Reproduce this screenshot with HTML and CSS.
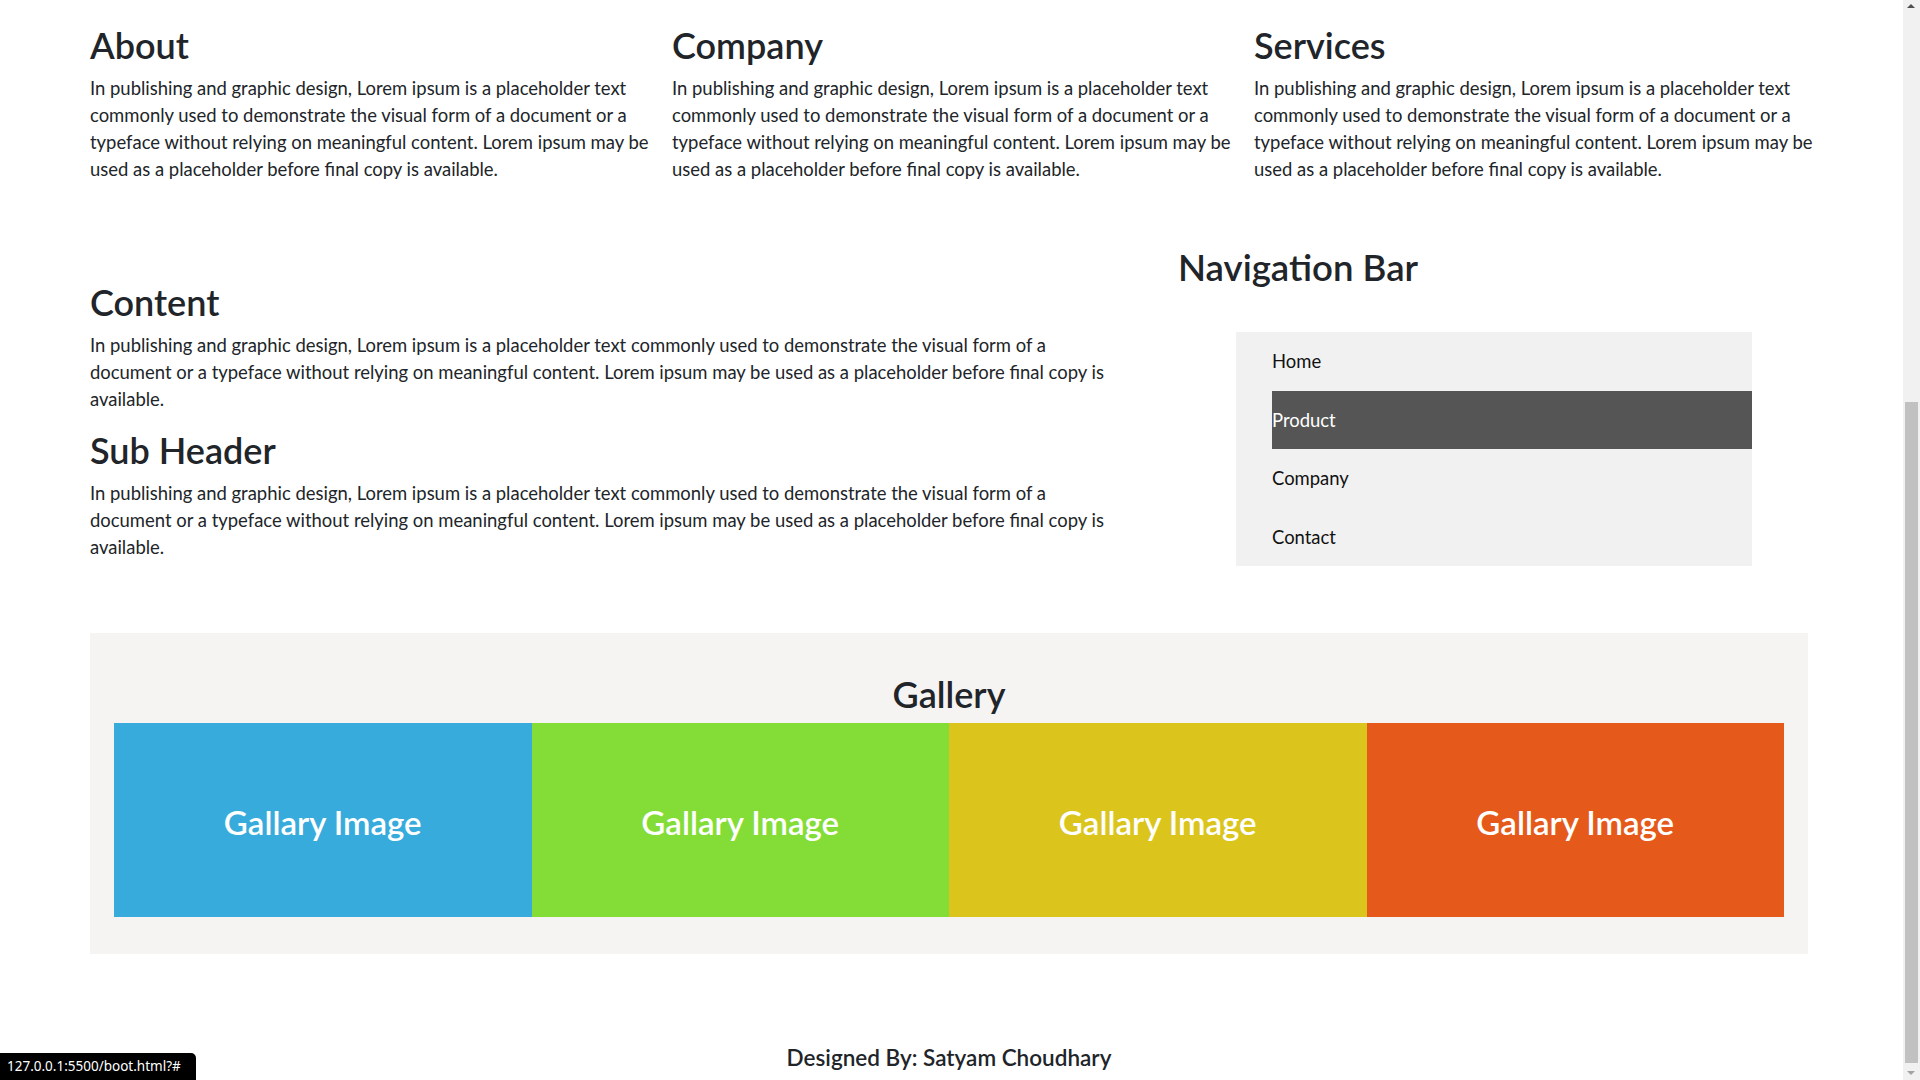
FILE: index.html
```html
<!DOCTYPE html>
<html lang="en">
<head>
<meta charset="utf-8">
<title>Boot</title>
<link rel="stylesheet" href="styles.css">
</head>
<body>
<div class="window">
  <div class="viewport">
    <div class="container">
      <div class="row-three">
        <section class="col">
          <h2 class="heading">About</h2>
          <p class="text">In publishing and graphic design, Lorem ipsum is a placeholder text commonly used to demonstrate the visual form of a document or a typeface without relying on meaningful content. Lorem ipsum may be used as a placeholder before final copy is available.</p>
        </section>
        <section class="col">
          <h2 class="heading">Company</h2>
          <p class="text">In publishing and graphic design, Lorem ipsum is a placeholder text commonly used to demonstrate the visual form of a document or a typeface without relying on meaningful content. Lorem ipsum may be used as a placeholder before final copy is available.</p>
        </section>
        <section class="col">
          <h2 class="heading">Services</h2>
          <p class="text">In publishing and graphic design, Lorem ipsum is a placeholder text commonly used to demonstrate the visual form of a document or a typeface without relying on meaningful content. Lorem ipsum may be used as a placeholder before final copy is available.</p>
        </section>
      </div>

      <div class="row-two">
        <div class="main-col">
          <h2 class="heading">Content</h2>
          <p class="text">In publishing and graphic design, Lorem ipsum is a placeholder text commonly used to demonstrate the visual form of a document or a typeface without relying on meaningful content. Lorem ipsum may be used as a placeholder before final copy is available.</p>
          <h2 class="heading">Sub Header</h2>
          <p class="text last">In publishing and graphic design, Lorem ipsum is a placeholder text commonly used to demonstrate the visual form of a document or a typeface without relying on meaningful content. Lorem ipsum may be used as a placeholder before final copy is available.</p>
        </div>
        <aside class="side-col">
          <h2 class="heading nav-title">Navigation Bar</h2>
          <ul class="nav">
            <li class="nav-item"><a href="#">Home</a></li>
            <li class="nav-item active"><a href="#">Product</a></li>
            <li class="nav-item"><a href="#">Company</a></li>
            <li class="nav-item"><a href="#">Contact</a></li>
          </ul>
        </aside>
      </div>

      <div class="gallery">
        <h2 class="heading gallery-title">Gallery</h2>
        <div class="tiles">
          <div class="tile blue">Gallary Image</div>
          <div class="tile green">Gallary Image</div>
          <div class="tile yellow">Gallary Image</div>
          <div class="tile orange">Gallary Image</div>
        </div>
      </div>

      <footer class="footer">
        <h5 class="credit">Designed By: Satyam Choudhary</h5>
      </footer>
    </div>
  </div>
  <div class="scrollbar">
    <div class="arrow up"></div>
    <div class="track">
      <div class="thumb"></div>
    </div>
    <div class="arrow down"></div>
  </div>
</div>
<div class="status">127.0.0.1:5500/boot.html?#</div>
</body>
</html>
```
FILE: styles.css
```css
* { box-sizing: border-box; }

html, body {
  margin: 0;
  padding: 0;
  height: 1080px;
  overflow: hidden;
  background: #ffffff;
}

body {
  font-family: Lato, "Noto Sans", sans-serif;
  color: #212529;
  font-size: 18.45px;
  line-height: 27px;
}

.window {
  display: flex;
  width: 1920px;
  height: 1080px;
}

.viewport {
  width: 1903px;
  height: 1080px;
  overflow: hidden;
}

.container {
  width: 1718px;
  margin-left: 90px;
  padding-top: 24px;
}

.heading {
  margin: 0 0 8px 0;
  font-size: 36px;
  line-height: 43px;
  font-weight: 600;
}

.text {
  margin: 0 0 16px 0;
}

.text.last { margin-bottom: 0; }

.row-three {
  display: grid;
  grid-template-columns: repeat(3, 568px);
  column-gap: 14px;
}

.row-two {
  display: flex;
  margin-top: 47px;
}

.main-col {
  width: 1020px;
  padding-top: 35px;
}

.side-col {
  margin-left: 68px;
  width: 630px;
}

.nav-title {
  margin-bottom: 0;
  font-size: 36.6px;
}

.nav {
  list-style: none;
  margin: 43px 0 0 58px;
  padding: 0 0 0 36px;
  width: 516px;
  background: #f1f1f1;
}

.nav-item a {
  display: block;
  height: 58.5px;
  line-height: 58.5px;
  color: #111;
  text-decoration: none;
}

.nav-item.active a {
  background: #555555;
  color: #ffffff;
}

.gallery {
  margin-top: 67px;
  background: #f5f4f3;
  padding: 40px 24px 37px 24px;
}

.gallery-title {
  text-align: center;
  margin-bottom: 7px;
}

.tiles {
  display: grid;
  grid-template-columns: repeat(4, 1fr);
  height: 194px;
}

.tile {
  display: flex;
  align-items: center;
  justify-content: center;
  color: #ffffff;
  font-size: 33px;
  font-weight: 600;
  padding-top: 4px;
}

.blue { background: #37acdc; }
.green { background: #84dd37; }
.yellow { background: #dbc51c; }
.orange { background: #e55a1a; }

.footer {
  margin-top: 90px;
  text-align: center;
}

.credit {
  margin: 0;
  font-size: 22.5px;
  line-height: 27px;
  font-weight: 600;
}

/* fake scrollbar */
.scrollbar {
  width: 17px;
  height: 1080px;
  background: #f1f1f1;
  display: flex;
  flex-direction: column;
}

.arrow {
  height: 17px;
  position: relative;
}

.arrow::after {
  content: "";
  position: absolute;
  left: 4px;
  width: 0;
  height: 0;
  border-left: 4.5px solid transparent;
  border-right: 4.5px solid transparent;
}

.arrow.up::after {
  top: 4px;
  border-bottom: 4px solid #505050;
}

.arrow.down::after {
  top: 8px;
  border-top: 4px solid #a3a3a3;
}

.track {
  flex: 1;
  display: flex;
  flex-direction: column;
  justify-content: flex-end;
  padding: 0 2px;
}

.thumb {
  height: 661px;
  background: #c1c1c1;
}

.status {
  position: fixed;
  left: 0;
  bottom: 0;
  width: 196px;
  height: 27px;
  background: #000000;
  color: #ffffff;
  font-family: "Segoe UI", "Noto Sans", sans-serif;
  font-size: 13.5px;
  line-height: 27px;
  padding-left: 7px;
  border-top-right-radius: 5px;
  white-space: nowrap;
}
```
